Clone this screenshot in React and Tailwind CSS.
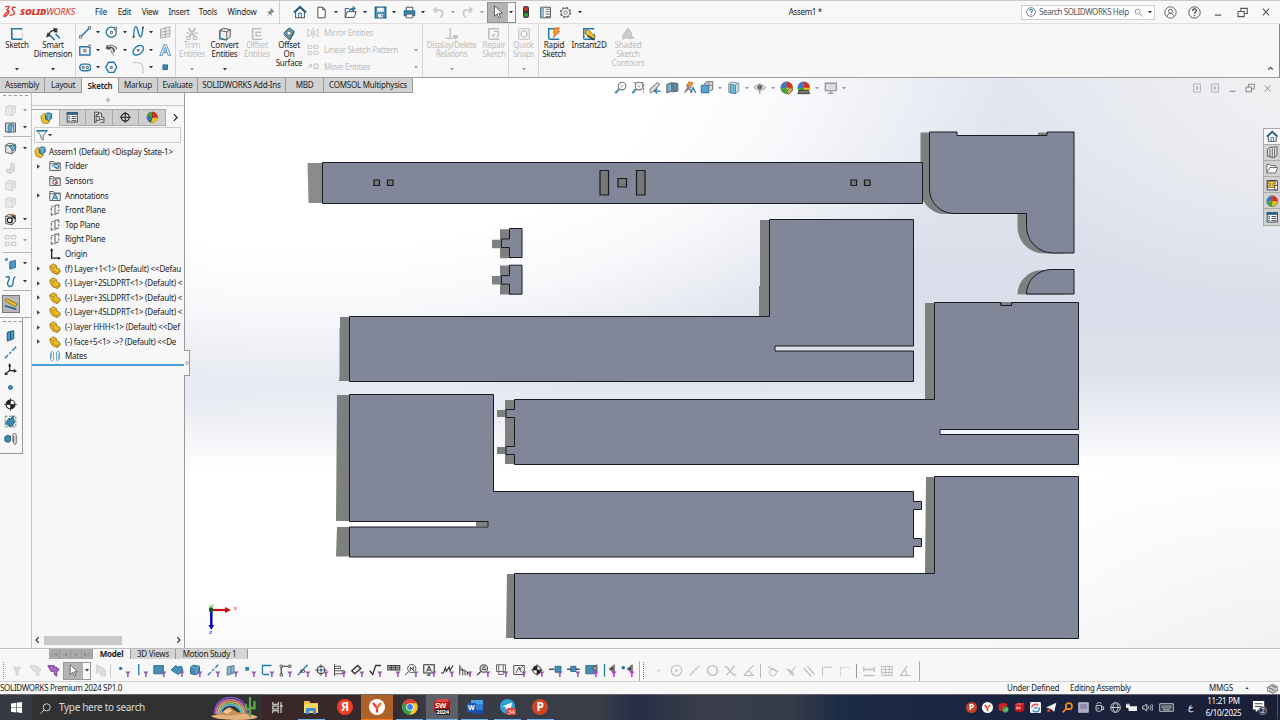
import React from "react";

const B = "#2279a8";
const D = "#4a4a4a";
const G = "#bfbfbf";

const line = (d, s = D, w = 1.3, f = "none") => <path d={d} stroke={s} strokeWidth={w} fill={f} />;

const part = (
  <>
    {line("M1 4l5-3 4 2.500v3l4 1.500 1 4-4 3.500-6-2.500-3-4z", "#8a6a10", 1, "#f0bd2a")}
    {line("M1.500 4.500l4 2v4l5.500 2.500v2M5.500 6.500l4-2.500M11 13l4-3", "#a57f17", 0.9)}
  </>
);
const assembly = (
  <>
    {line("M1 6l4-4 3 1v6l5 3-4 3.500-6-2z", "#8a6a10", 0.9, "#f0bd2a")}
    {line("M7 3l3-2 5 1v6l-4 3-4-2z", "#17506f", 0.9, "#3f93bd")}
    {line("M7 3l4 1v6M11 4l4-2", "#cbe5f2", 0.8)}
  </>
);
const ball = (
  <>
    <circle cx="8" cy="8" r="7" fill="#e8c51e" stroke="#444" strokeWidth=".6" />
    <path d="M8 8V1A7 7 0 0 0 1 9z" fill="#3a78d0" />
    <path d="M8 8L8 1A7 7 0 0 1 15 8z" fill="#dd2c22" />
    <path d="M8 8L1 9A7 7 0 0 0 8 15z" fill="#35a548" />
  </>
);
const ballDark = (
  <>
    <circle cx="8" cy="8" r="7" fill="#222" />
    <path d="M8 9L8 1A7 7 0 0 0 1.200 7z" fill="#35a548" />
    <path d="M8 9V1A7 7 0 0 1 15 8z" fill="#dd2c22" />
    <path d="M8 9l7-1A7 7 0 0 1 6 14.700z" fill="#e8c51e" />
    <path d="M8 9L1.100 7A7 7 0 0 0 4 13.700z" fill="#3a78d0" />
  </>
);
const box3d = (c, s, t) => (
  <>
    {line("M2 4l4-2.500 8 1.500v8l-4 3.500-8-1.500z", s, 1, c)}
    {line("M2 4l8 1.500v9M10 5.500l4-2.500", t || s, 0.9)}
  </>
);
const folder = (inner) => (
  <>
    {line("M1 14V2h5l1 2h8v10z", "#555", 1.200, "#efefef")}
    {line("M1 5h14", "#555", 1)}
    {inner}
  </>
);
const mag = (
  <>
    <circle cx="9.500" cy="6" r="4.500" fill="#fff" stroke="#777" strokeWidth="1.300" />
    <circle cx="9.500" cy="6" r="2" fill="#ccc" />
    {line("M6 9.500L1.500 14.500", "#4f93b8", 2.600)}
  </>
);

const icons = {
  home: <>{line("M3 8v6.500h10V8L8 3z", D, 1.200, "#fff")}{line("M1 8.500L8 2l7 6.500", "#205e80", 2)}{line("M6.500 14v-4.500h3V14", B, 1.200)}</>,
  file: line("M3.500 1.500h6l3 3v10h-9zM9.500 1.500v3h3", D, 1.200, "#fff"),
  open: <>{line("M1.500 14V3h4l1 1.500h5V7M1.500 14L4 7h11l-2.500 7z", D, 1.200, "#fff")}{line("M7 7c0-4 2-4 6-4M10.500 .5l3 2.500-3 3", B, 1.500)}</>,
  save: <>{line("M1.500 1.500h13v13h-13z", "#1c5f86", 1.500, "#4c93b8")}<path d="M4 2h8v5H4zM5 10h6v4H5z" fill="#f5f5f5" />{line("M9.500 11v2", D)}</>,
  print: <>{line("M4 6V1.500h8V6", D, 1.200, "#fff")}{line("M1.500 6h13v6h-13z", "#1c5f86", 1.200, "#3b86b0")}{line("M4 10h8v4.500H4z", D, 1, "#fff")}</>,
  undo: line("M3 5h6c6 0 5 7 1 9M6 1.500L2.500 5L6 8.500", "#ccc", 2.200),
  redo: line("M13 5H7c-6 0-5 7-1 9M10 1.500L13.500 5L10 8.500", "#ccc", 2.200),
  cursor: line("M4 1v12l3-3 2 5 2-1-2-4.500h4z", "#555", 1, "#fff"),
  light: <><rect x="4" y="0" width="8" height="16" rx="3" fill="#3a3a3a" /><circle cx="8" cy="4" r="2.800" fill="#d8311f" /><circle cx="8" cy="12" r="2.800" fill="#35a03c" /></>,
  list: <>{line("M2 1.500h12v13H2z", D, 1.200, "#fff")}<path d="M2 1.500h4v13H2z" fill="#6aa7c6" />{line("M3 5h2M3 8h2M3 11h2", "#fff", 1)}{line("M8 4h5M8 7h5M8 10h5M8 13h5", D, 1)}</>,
  gear: <><circle cx="8" cy="8" r="6" stroke="#666" strokeWidth="2" strokeDasharray="2.700 2" fill="#fff" /><circle cx="8" cy="8" r="5" stroke="#666" fill="#fff" /><circle cx="8" cy="8" r="2.200" stroke="#666" fill="none" /></>,
  pin: line("M9 1l5 5-2 1-3 3v3L3 7h3l3-4zM6 10l-4 4", "#777", 1, "#8a8a8a"),
  sketch: <>{line("M13 3h2M3 14h11M14 5v8M3 8h2", "#bbb", 0.800)}{line("M14 2H2v10c0 2 1 2 2 2h10", B, 1.900)}</>,
  dim: <>{line("M3 9C5 3 10 3 13 6", "#333", 1.500)}<path d="M0 12l2-6 4 4zM8 1l6 1-4 5z" fill="#333" />{line("M5 10l5 5M11 8l5 5", B, 1.900)}</>,
  line: <>{line("M2 14L14 2", B, 1.700)}{line("M.5 12.500h3v3h-3zM12 .8h3v3h-3z", D, 1, "#fff")}</>,
  circ: <><circle cx="8" cy="8" r="6.500" fill="none" stroke={B} strokeWidth="1.700" />{line("M7 7h2.500v2.500H7zM12 1.500h3v3h-3z", D, 1, "#fff")}</>,
  spline: <>{line("M2 14C3 -4 6 -1 8 8s5 8 6-6", B, 1.700)}<circle cx="2" cy="14" r="1.400" fill={D} /><circle cx="14" cy="2" r="1.400" fill={D} /></>,
  plane3: <>{line("M2 4l12-3v12l-12 2.500zM2 8l12-2.500M2 12l12-2.500M8 2v12", "#999", 1, "#eee")}</>,
  rect: <>{line("M1 3.500h13v10.500H1z", B, 1.800)}{line("M6 7h3v3H6zM12.500 1.500h3v3h-3z", D, 1, "#fff")}</>,
  arc: <>{line("M1 6C3 0 12 0 15 7", "#777", 1.300)}{line("M3 6c4-4 9-1 9 4M3 2v4h4", D, 1.800)}{line("M8 8h3v3H8zM9 12l2 3M13 4h2v2", "#777", 1)}</>,
  ellipse: <><ellipse cx="8" cy="8" rx="7.500" ry="5" transform="rotate(-40 8 8)" fill="none" stroke={B} strokeWidth="1.700" />{line("M7 7h2v2H7z", D, 1)}</>,
  text: line("M1 15L6.500 1h3L15 15h-3l-1.500-4h-5L4 15zM6 9h4L8 4z", B, 1),
  slot: <><rect x="1" y="4" width="14" height="8.500" rx="4" fill="none" stroke={B} strokeWidth="1.800" />{line("M4 7h2.500v2.500H4zM9.500 7h2.500v2.500H9.500z", D, 1)}</>,
  hex: <>{line("M4.500 1.500h7L15 8l-3.500 6.500h-7L1 8z", B, 1.800)}{line("M6.800 7h2.500v2.500H6.800z", D, 1)}</>,
  fillet: line("M1 2h6c5 0 7 4 7 7v6M12 15h3", "#c4c4c4", 1.300),
  point: <rect x="5" y="5" width="6" height="6" fill="#3388b5" stroke="#1d5e83" />,
  trim: <>{line("M4 1l7 10M12 1L5 11", G, 2)}<circle cx="4" cy="12.500" r="2" fill="none" stroke={G} strokeWidth="1.500" /><circle cx="11.500" cy="12.500" r="2" fill="none" stroke={G} strokeWidth="1.500" />{line("M1 7h4M11 7h4", G, 1.500)}</>,
  convert: <>{line("M2 4l4-2.500 8 1.500v8l-4 3.500-8-1.500z", D, 1.100, "#f0f0f0")}{line("M2 4l8 1.500v9M10 5.500l4-2.500", D, 1)}{line("M2 4.500v9l8 1.500", B, 1.500)}</>,
  offset: line("M13 2H3v12h11M13 6H7v4h6", G, 1.900),
  surf: <>{line("M2 7l6-6 6 4-5 9z", "#17506f", 1.100, "#69a9c8")}<circle cx="8" cy="7" r="2.500" fill="#fff" stroke={D} />{line("M2 9l7 6 5-9", D, 1)}</>,
  mirror: line("M8 1v14M1 3v10l5-3V6zM15 3v10l-5-3V6z", G, 1.100),
  pattern: line("M1.500 2h5v4h-5zM9.500 2h5v4h-5zM1.500 10h5v4h-5zM9.500 10h5v4h-5z", G, 1.100),
  move: line("M1 10l4-4M2 5h4v4M9.500 4h5v6h-5z", G, 1.300),
  disp: <>{line("M6 1v12M1 13h8", G, 1.500)}{line("M9 11h6M12 9v5", G, 2.500)}</>,
  repair: line("M14 2H2v10c0 2 0 2 2 2h10M6 11l3-3M8 5h5v5l-2 2", G, 1.700),
  snaps: <>{line("M2 2v12h12M3 2h11v11", G, 1.300)}<circle cx="8" cy="8" r="3.500" fill="none" stroke={G} strokeWidth="1.400" /></>,
  rapid: <>{line("M14 2H2v10c0 2 0 2 2 2h10", B, 1.700)}{line("M9 1h5l-2 4h3l-8 7 2-5H7z", "#d75c1b", 0.900, "#f3a11f")}</>,
  inst: <>{line("M14 2H2v10c0 2 0 2 2 2h10V8", B, 1.700)}{line("M4 4l3-1 8 8-2 2-9-5z", "#806310", 1, "#f0c33a")}{line("M6 10l8 5", "#333", 1.500)}</>,
  shaded: line("M4 7l4-6 4 6v3l3 3H9l-3-1-4 2V9z", "#bbb", 1, "#ccc"),
  chev: line("M4 10l4-4 4 4", D, 2.400),
  part, assembly, ball, ballDark,
  props: <>{line("M1.500 2h13v12h-13z", D, 1.300, "#fff")}<path d="M1 1.500h14V5H1z" fill="#2c6585" />{line("M3 7h2M3 9.500h2M3 12h2", B, 1.700)}{line("M7 7h6M7 9.500h6M7 12h6", D, 1.200)}</>,
  config: line("M2 1.500h5v3H4v10H2zM4 7h4v5H4M7 2l4 1v5h3v6.500h-4M9 11h4", D, 1.200, "#e4e4e4"),
  target: <><circle cx="8" cy="8" r="5" fill="none" stroke="#222" strokeWidth="1.500" />{line("M8 1v14M1 8h14", "#222", 1.300)}</>,
  funnel: <>{line("M1 2h14L9.500 9v6L6.500 12V9z", "#555", 1.100, "#e9f3f8")}{line("M1 2.500h14", B, 2)}</>,
  fHist: folder(line("M5 9a4 3 0 1 1 4 3M8 8v2h3", B, 1.400)),
  fSens: folder(<><circle cx="8" cy="9.500" r="3" fill="#fff" stroke="#444" strokeWidth="1.300" />{line("M8 9.500l3 2", "#d32", 1.700)}</>),
  fAnn: folder(line("M4.500 13L8 5l3.500 8M5.800 10.500h4.500", B, 1.500)),
  plane: line("M3 4l3-1M8.500 2L13 1v4M13 7v3M13 12l-4 1M6 14l-3 1v-4M3 9V5M8 1v14", D, 1.200),
  origin: <>{line("M3.500 2v11.500H14", "#222", 1.700)}<path d="M1.500 4l2-4 2 4zM12 11.500l4 2-4 2z" fill="#222" /></>,
  mates: line("M2 4v8c0 3 4 3 4 0V4c0-3-3-3-3 0v7M14 12V4c0-3-4-3-4 0v8c0 3 3 3 3 0V5", "#5b9fc4", 1.200),
  boxGray: <>{box3d("#eaeaea", "#ccc")}</>,
  boxIns: <>{line("M2 2.500h12v11H2z", D, 1.200, "#eee")}{line("M5 5l4-1v9l-4 1zM9 4l3 1v8", "#2b6f94", 1, "#70acc9")}</>,
  boxBlue: <>{box3d("#e4e4e4", D)}{line("M6 5l5-1 4 2-4 5z", "#1c5f86", 1, "#6db2d2")}</>,
  clipGray: line("M9 1l4 2v8l-5 3-5-2v-3h5z", "#ccc", 1.200, "#ddd"),
  smart: <>{box3d("#ddd", D)}<circle cx="7" cy="9" r="3" fill="#fff" stroke="#222" strokeWidth="1.500" />{line("M9 2l5 5", "#333", 2.500)}{line("M8 2h4", "#e08a1e", 2)}</>,
  refGeo: <>{line("M7 6l7-2v9l-7 2z", "#1c5f86", 1, "#4b9ac1")}<circle cx="3" cy="3" r="2" fill="#4b9ac1" /></>,
  curve: line("M2 3c6-3 5 2 3 5-2 5 2 8 5 5 3-4-1-8 4-11", B, 1.700),
  measure: <>{line("M1 4l2-2 12 6-2 3z", "#8c6a0c", 1, "#f3c52f")}{line("M1 10l13 4", "#1d5e83", 2)}</>,
  planeB: line("M4 4l8-2v10l-8 3zM8 3v10", "#17506f", 1.100, "#4b9ac1"),
  axisD: line("M1 15l4-4M6.500 9.500l2-2M10 6l5-5", B, 1.700),
  triad: <>{line("M7 2v7l-5 5M7 9l7 1", "#222", 1.600)}<path d="M5 4l2-4 2 4zM12 7l4 3-4 2zM1 11l0 4 4-1z" fill="#222" /></>,
  dot: <circle cx="8" cy="8" r="2.500" fill="#3d90ba" stroke="#1d5e83" />,
  cg: <><circle cx="8" cy="8" r="5.500" fill="#fff" stroke="#222" strokeWidth="1.300" /><path d="M8 8V2.500A5.500 5.500 0 0 0 2.500 8zM8 8h5.500A5.500 5.500 0 0 1 8 13.500z" fill="#222" />{line("M8 0v16M0 8h16", "#222", 0.800)}</>,
  bbox: <><path d="M1.500 1.500h13v13h-13z" fill="none" stroke="#666" strokeDasharray="3 1.500" />{line("M2 10l4-6 2 1 3-4 2 8-3 5-5-1z", "#17506f", 1, "#3d89af")}</>,
  mateB: <>{line("M1 6l3-2 4 1v6l-3 2-4-2z", "#17506f", 1, "#3d89af")}{line("M11 12V4c0-3 4-3 4 0v9c0 3-3 3-3 0V5", "#555", 1.200)}</>,
  zoomFit: mag,
  zoomArea: <><path d="M3 2h12v12" fill="none" stroke="#777" strokeDasharray="3 1.500" strokeWidth="1.200" />{mag}</>,
  prev: <>{line("M2 10L11 2l3 2-7 8-4 2z", "#888", 1.200, "#ddd")}{line("M15 12H8l3-3M8 12l3 3", B, 1.500)}</>,
  section: <>{line("M1 4l6-2v10l-6 2z", "#444", 1, "#79b4d0")}{line("M8 2l6 1v9l-6 1z", "#555", 1, "#4d8eaf")}</>,
  dyn: <>{line("M2 14L8 3M5 6l6 8M3 12l7-5", "#888", 1.800, "none")}{line("M4 6l3-5 5 1-2 4z", "#c2701a", 1, "#eca13f")}{line("M9 14l3-6 3 6", B, 1.500)}</>,
  orient: <>{line("M5 4l3-3h7v9l-3 2", "#777", 1.200, "#ddd")}{line("M1.500 5h9v9h-9z", "#1c5f86", 1, "#5ba5c9")}{line("M10.500 5h5M10.500 1v4", "#777", 1)}</>,
  style: <>{line("M2 3l4-2 8 1.500v9.500l-4 3-8-1.500z", "#888", 1, "#c3dbe6")}{line("M4 4l6 1.200v9.800l-6-1.200z", "#4b7e98", 1, "#6fb5d6")}{line("M10 5l4-2.500", "#888", 0.900)}</>,
  eye: <>{line("M1 8c4-5 10-5 14 0-4 4-10 4-14 0z", "#aaa", 1.200, "#ddd")}<circle cx="8" cy="7.500" r="2.700" fill="#555" />{line("M8 3v12", "#888")}</>,
  ballE: <>{ball}{line("M8 12l5-5 2 4-5 5z", "#76592b", 1, "#d2a965")}</>,
  scene: <>{ball}{line("M1 15l2-4h10l2 4z", "#333", 1, "#777")}</>,
  monitor: line("M1.500 2.500h13v9h-13zM8 11.500V14M4.500 14.500h7", "#888", 1.300, "#ddd"),
  winMin: line("M3 13h10", "#555", 1.900),
  winRes: line("M1.500 6.500h9V14h-9zM5.500 6.500V2H15v7.500h-4.500", "#555", 1.500),
  winX: line("M3 2.500l10 11M13 2.500L3 13.500", "#555", 1.700),
  panL: line("M2.500 1.500h11v13h-11zM9 5L6 8l3 3z", "#888", 1.300),
  panR: line("M2.500 1.500h11v13h-11zM7 5l3 3-3 3z", "#888", 1.300),
  help: <><circle cx="8" cy="8" r="7" fill="#fff" stroke="#555" strokeWidth="1.200" />{line("M5.700 6c0-3.500 5-3 4.500 0C10 7.500 8 7.500 8 9.500M8 11v1.500", B, 1.800)}</>,
  help2: <><circle cx="8" cy="8" r="7" fill="none" stroke="#555" strokeWidth="1.200" />{line("M5.700 6c0-3.500 5-3 4.500 0C10 7.500 8 7.500 8 9.500M8 11v1.500", "#444", 1.500)}</>,
  user: <><circle cx="8" cy="8" r="7" fill="none" stroke="#666" strokeWidth="1.200" /><circle cx="8" cy="6.500" r="2.500" fill="none" stroke="#666" strokeWidth="1.200" />{line("M4 13c0-5 8-5 8 0", "#666", 1.200)}</>,
  search: <><circle cx="6.500" cy="6.500" r="4.500" fill="none" stroke="#777" strokeWidth="1.300" />{line("M10 10l5 5", "#777", 1.500)}</>,
  cabinet: line("M2 4l3-2 9-1v11l-4 3-8-2zM5 4v10M8 3v11M11 3v11", "#555", 1.200, "#e8e8e8"),
  openF: line("M1 14V3h4l1 1.500h6V7M1 14L5 7h10l-3 7z", "#666", 1.200, "#fff"),
  palette: <>{line("M1.500 2h13v12h-13z", "#333", 1.200, "#fff")}<path d="M2 3h10v3H9v2h3v3H2V8h3V6H2z" fill="#f0bd2a" stroke="#333" strokeWidth=".7" /><path d="M11 8h4v6h-4z" fill="#eee" stroke="#333" /></>,
  fun: line("M3 3h10L9.500 8v6L6.500 12V8z", "#ccc", 1, "#ddd"),
  fun3: line("M1 2h8v2h3v2h3l-3 4v5l-3-2V9L5 8z", "#c8c8c8", 1, "#e2e2e2"),
  funP: line("M1 2h8v2h3v2h3l-3 4v5l-3-2V9L5 9z", "#5c2a80", 1, "#a86ac5"),
  curG: line("M3 1v11l3-3 2 5 6 1V7z", "#ccc", 1, "#ddd"),
  sDot: <circle cx="5" cy="6" r="2.400" fill="#2c86b3" />,
  sLine: line("M5 0v15", B, 1.800),
  sFace: line("M1 2h13v11H1z", "#1c5f86", 1, "#438fb6"),
  sSurf: line("M0 8l6-6 3 2 5-1 2 6-6 5-4-2z", "#1c5f86", 1, "#438fb6"),
  sBody: box3d("#438fb6", "#184e6c", "#8cc0da"),
  sAxis: line("M1 15l4-4M6.500 9.500l3-3M11 5l4-4", B, 1.700),
  sPlane: line("M3 4l9-2v10l-9 3zM8 3v10", "#3c6f89", 1.100, "#88bbd3"),
  sPt: <rect x="3" y="4" width="5" height="5" fill="#2c86b3" />,
  sSk: line("M14 2H2v10c0 2 0 2 2 2h7", B, 1.700),
  sSeg: <>{line("M3 15V3h12", "#333", 1.500)}{line("M1.500 1.500h3v3h-3zM13 1.500h3v3h-3zM1.500 13h3v3h-3z", "#333", 1, "#fff")}</>,
  sMid: <>{line("M1 15L14 1", B, 1.600)}{line("M5 8h5v3H5z", "#333", 1)}</>,
  sCm: <><circle cx="8" cy="8" r="5" fill="#fff" stroke="#333" strokeWidth="1.400" />{line("M8 0v16M0 8h16", "#333", 1)}<circle cx="8" cy="8" r="1.500" fill={B} /></>,
  sDim: line("M2 0v16M2 3h8v3H2M2 9h13v4H2", "#444", 1.200),
  sAng: line("M1 9l8-7 4 4-8 7z", "#333", 1.900, "#eee"),
  sSurfF: line("M1 9l4 5L9 2h7", "#333", 1.700),
  sGtol: line("M0 2h17v6H0zM6 2v6M11 2v6M2 5h3M7 5h3M12 5h3", "#444", 1.500, "#aaa"),
  sNote: <><circle cx="9" cy="6" r="5.500" fill="#fff" stroke="#444" strokeWidth="1.200" />{line("M0 15l5-5M7 9V4l4 4.500V3", "#333", 1.300)}</>,
  sDat: <>{line("M1 1h14v11H1zM8 12v3M5 15h5", "#333", 1.400, "#eee")}{line("M5 10l3-7 3 7M6 8h4", "#333", 1.300)}</>,
  sWeld: line("M0 12h3l3-7 1 5 4-6 1 5 4-7", "#333", 1.500),
  sHatch: line("M1 1v14M1 8h6l9 7M5 8v7M8 9v6M11 11v4M1 4l5 4", "#444", 1.300),
  sMag: <><circle cx="9" cy="6" r="5" fill="#ddd" stroke="#444" strokeWidth="1.400" />{line("M0 15l5-5M6 7h6M7 4h4", "#333", 1.500)}</>,
  sScrew: line("M2 1h12v9H2zM5 10v4h6v-4M5 1v9M11 1v9", "#666", 1.300),
  sPic: line("M1 2h14v12H1zM4 12l4-8 3 7M8 8l5-5", "#444", 1.200),
  sBlk: <>{line("M0 7h7", "#333", 1.700)}{line("M8 3h8v8H8z", "#1d5e83", 1, "#438fb6")}</>,
  sBlk2: <>{line("M0 7h17", "#333", 1.700)}{line("M5 3h7v7H5z", "#1d5e83", 1, "#438fb6")}</>,
  sGr: <>{line("M1 2h13v11H1z", "#1d5e83", 1, "#438fb6")}{line("M9 6l7-5v9z", "#444", 1, "#999")}</>,
  sGr2: <>{line("M2 0v17", B, 1.700)}{line("M8 7l7-6v10z", "#444", 1, "#888")}<circle cx="12" cy="6" r="1.500" fill="#333" /></>,
  sGr3: <><circle cx="3" cy="5" r="2.400" fill={B} />{line("M8 7l7-6v10z", "#444", 1, "#888")}<circle cx="12" cy="6" r="1.500" fill="#333" /></>,
  nDot: <circle cx="8" cy="8" r="1.300" fill={G} />,
  nCen: <><circle cx="8" cy="8" r="6.500" fill="none" stroke={G} strokeWidth="1.400" /><circle cx="8" cy="8" r="1.500" fill={G} /></>,
  nLine: line("M2 14L14 2", G, 1.500),
  nCirc: <circle cx="8" cy="8" r="6" fill="none" stroke={G} strokeWidth="1.800" />,
  nX: line("M1 3c6 0 6 10 14 11M13 2L3 14", G, 1.700),
  nNear: line("M2 14L14 2M3 14h12M8 8l5 5", G, 1.500),
  nTan: <><circle cx="8" cy="10" r="4.500" fill="none" stroke={G} strokeWidth="1.400" />{line("M1 2l14 7", G, 1.400)}</>,
  nPerp: line("M2 5l10 9M14 2L6 13M5 6l6 5", G, 1.500),
  nPar: line("M1 4l10 11M6 2l10 11", G, 1.500),
  nCor: line("M2 15V3h13", G, 1.400),
  nCorD: <path d="M2 15V3h13" fill="none" stroke={G} strokeWidth="1.500" strokeDasharray="2 1.500" />,
  nLen: line("M1 2v7M15 2v7M1 6h14M1 14h14", G, 1.700),
  nGrid: line("M1 2h14v12H1zM6 1v14M11 1v14M1 6h14M1 10h14", G, 1.300),
  nAng: line("M15 14H2L11 1M7 7c3 1 3 3 3 7", G, 1.500),
  trafficSt: <>{line("M0 7l8-5 8 4v4l-7 5-9-4z", "#555", 1.200, "#ccc")}{line("M3 7l8 4M7 4l6 3", "#555", 1.200)}</>,
};

const S = "block shrink-0";
function Icon({ n, c = "size-3" }) {
  return (
    <svg viewBox="0 0 16 16" className={`${S} ${c}`} aria-hidden="true">
      {icons[n]}
    </svg>
  );
}

function Caret({ dim, up }) {
  return (
    <svg viewBox="0 0 5 3" className={`${S} w-[4px] h-[2.500px]`} aria-hidden="true">
      <path d={up ? "M0 3h5L2.500 0z" : "M0 0h5L2.500 3z"} fill={dim ? "#9a9a9a" : "#333"} />
    </svg>
  );
}

const Cell = ({ w, children }) => <div className={`flex items-center justify-center shrink-0 ${w}`}>{children}</div>;

/* ---------- title bar ---------- */
function TitleBar() {
  const menus = [
    ["File", "w-[24px]"], ["Edit", "w-[23px]"], ["View", "w-[28px]"], ["Insert", "w-[30px]"], ["Tools", "w-[28px]"], ["Window", "w-[40px]"],
  ];
  const quick = [["file"], ["open"], ["save"], ["print"], ["undo", 1], ["redo", 1]];
  return (
    <header className="flex h-6 items-center border-t border-b border-t-[#c9c9c9] border-b-[#dedede] bg-[#f8f8f8]">
      <div className="flex w-[89px] shrink-0 items-center pl-[3px] text-[#d9352b]">
        <svg viewBox="0 0 26 28" className="h-[14px] w-[14px]">
          <path d="M3 4c6-2 9-2 8 1S7 9 5 10M8 10c4 1 4 5-1 10-3 3-6 4-6 2s5-7 8-10M25 5c-9-3-9 3-5 7s2 9-8 8" fill="none" stroke="#d9352b" strokeWidth="2.600" />
        </svg>
        <span className="ml-[3px] text-[9.300px] leading-none italic tracking-[-0.200px]"><b className="font-black">SOLID</b>WORKS</span>
      </div>
      <nav className="flex w-[175px] shrink-0">
        {menus.map(([m, w]) => <div key={m} className={`text-center shrink-0 whitespace-nowrap ${w}`}>{m}</div>)}
      </nav>
      <Cell w="w-[15px] ml-[-1px]"><Icon n="pin" c="size-[9px]" /></Cell>
      <div className="ml-px h-[23px] w-px shrink-0 bg-[#cfcfcf]" />
      <Cell w="w-[40px]"><Icon n="home" c="size-[14px]" /></Cell>
      {quick.map(([n, dim]) => (
        <div key={n} className="flex w-[29.300px] shrink-0 items-center -translate-x-[5px]">
          <Cell w="w-[13px]"><Icon n={n} c="size-[13px]" /></Cell>
          <Cell w="w-[15px]"><Caret dim={dim} /></Cell>
        </div>
      ))}
      <div className="-ml-[9px] flex h-[21px] w-[29px] shrink-0 border border-[#8f8f8f]">
        <div className="flex w-[20px] items-center justify-center bg-[#b3b3b3]"><Icon n="cursor" c="size-[14px]" /></div>
        <Cell w="w-[7px]"><Caret /></Cell>
      </div>
      <Cell w="w-[20px]"><Icon n="light" c="size-[12px]" /></Cell>
      <Cell w="w-[20px]"><Icon n="list" c="size-[13px]" /></Cell>
      <Cell w="w-[20px]"><Icon n="gear" c="size-[13px]" /></Cell>
      <Cell w="w-[9px]"><Caret /></Cell>
      <div className="pl-[204px] tracking-[-0.350px] whitespace-nowrap">Assem1 *</div>
      <div className="ml-auto mr-[3px] flex h-[15px] w-[134px] shrink-0 items-center border border-[#d0d0d0] bg-white text-[8px] text-[#555]">
        <Cell w="w-[17px]"><Icon n="help" c="size-[10px]" /></Cell>
        <span className="w-[76px] shrink-0 tracking-[-0.380px] whitespace-nowrap">Search SOLIDWORKS Help</span>
        <Cell w="w-[10px] ml-auto mr-[3px]"><Icon n="search" c="size-[9px]" /></Cell>
        <Cell w="w-[8px]"><Caret /></Cell>
      </div>
      <Cell w="w-[24px]"><Icon n="user" c="size-[13px]" /></Cell>
      <Cell w="w-[24px]"><Icon n="help2" c="size-[13px]" /></Cell>
      <Cell w="w-[23px]"><Icon n="winMin" c="size-[10px]" /></Cell>
      <Cell w="w-[27px]"><Icon n="winRes" c="size-[11px]" /></Cell>
      <Cell w="w-[20px] mr-[4px]"><Icon n="winX" c="size-[10px]" /></Cell>
    </header>
  );
}

/* ---------- ribbon ---------- */
function Big({ n, label, w, dim, caret }) {
  return (
    <div className={`flex h-full shrink-0 flex-col items-center pt-[3px] ${w}`}>
      <Icon n={n} c="size-[14px]" />
      <div className={`h-[27px] whitespace-pre text-center leading-[8.800px] ${dim ? "text-[#bdbdbd]" : ""}`}>{label}</div>
      {caret && <div><Caret dim={dim} /></div>}
    </div>
  );
}

const Sep = () => <div className="h-full w-px shrink-0 bg-[#d6d6d6]" />;

function Ribbon() {
  const grid = [["line", "circ", "spline", "plane3"], ["rect", "arc", "ellipse", "text"], ["slot", "hex", "fillet", "point"]];
  return (
    <section className="flex h-[54px] shrink-0 border-b border-[#9c9c9c] bg-[#f7f7f7]">
      <Big n="sketch" label="Sketch" w="w-[34px]" caret />
      <Big n="dim" label={"Smart\nDimension"} w="w-[38px] mr-[3px]" caret />
      <Sep />
      <div className="flex h-full w-[99px] shrink-0 flex-col">
        {grid.map((row, r) => (
          <div key={r} className="flex h-[17.400px] items-center pl-[2px]">
            {row.map((n, i) => (
              <div key={n} className="flex w-[26.700px] shrink-0 items-center">
                <Cell w="w-[14px]"><Icon n={n} c="size-[12.500px]" /></Cell>
                {i < 3 && n !== "hex" && <Cell w="w-[12px]"><Caret /></Cell>}
              </div>
            ))}
          </div>
        ))}
      </div>
      <Sep />
      <Big n="trim" label={"Trim\nEntities"} w="w-[32px]" dim caret />
      <Big n="convert" label={"Convert\nEntities"} w="w-[33px]" caret />
      <Big n="offset" label={"Offset\nEntities"} w="w-[32px]" dim />
      <Big n="surf" label={"Offset\nOn\nSurface"} w="w-[32px]" />
      <div className="flex w-[117px] shrink-0 flex-col text-[#bdbdbd]">
        {[["mirror", "Mirror Entities"], ["pattern", "Linear Sketch Pattern", 1], ["move", "Move Entities", 1]].map(([n, t, c]) => (
          <div key={n} className="flex h-[17.400px] items-center pl-[2px]">
            <Icon n={n} c="size-[12px]" />
            <span className="ml-[5px] w-[90px] tracking-[-0.300px] whitespace-nowrap">{t}</span>
            {c && <Caret dim />}
          </div>
        ))}
      </div>
      <Sep />
      <Big n="disp" label={"Display/Delete\nRelations"} w="w-[57px] tracking-[-0.320px]" dim caret />
      <Big n="repair" label={"Repair\nSketch"} w="w-[28px]" dim />
      <Sep />
      <Big n="snaps" label={"Quick\nSnaps"} w="w-[29px]" dim caret />
      <Sep />
      <Big n="rapid" label={"Rapid\nSketch"} w="w-[30px]" />
      <Big n="inst" label="Instant2D" w="w-[40px]" />
      <Big n="shaded" label={"Shaded\nSketch\nContours"} w="w-[38px]" dim />
      <div className="ml-auto flex items-end border-r border-[#888] pr-[4px] pb-[4px]"><Icon n="chev" c="size-[9px]" /></div>
    </section>
  );
}

/* ---------- command tabs + heads-up toolbar ---------- */
function TabRow() {
  const tabs = [
    ["Assembly", "w-[45px]"], ["Layout", "w-[37px]"], ["Sketch", "w-[37px]"], ["Markup", "w-[39px]"], ["Evaluate", "w-[40px]"],
    ["SOLIDWORKS Add-Ins", "w-[88px]"], ["MBD", "w-[38px]"], ["COMSOL Multiphysics", "w-[89px]"],
  ];
  const view = [
    ["zoomFit"], ["zoomArea"], ["prev"], ["section"], ["dyn"], ["orient", 1], ["style", 1], ["eye", 1], ["ballE"], ["scene", 1], ["monitor", 1],
  ];
  return (
    <div className="flex h-[15px] shrink-0">
      <div className="flex h-[15px] w-[413px] shrink-0">
        {tabs.map(([t, w]) => (
          <div key={t} className={`flex shrink-0 items-center justify-center whitespace-nowrap border-r border-[#999] ${w} ${t === "Sketch" ? "bg-[#f7f7f7] font-semibold" : "border-b bg-[#d2d2d2]"}`}>{t}</div>
        ))}
      </div>
      <div className="ml-[199px] flex h-[20px] items-center">
        {view.map(([n, c]) => (
          <React.Fragment key={n}>
            <Cell w="w-[17.300px]"><Icon n={n} c="size-[13.500px]" /></Cell>
            {c && <Cell w="w-[9.200px]"><Caret dim /></Cell>}
          </React.Fragment>
        ))}
      </div>
      <div className="ml-auto mr-[4px] flex h-[20px] items-center opacity-70">
        <Cell w="w-[18px]"><Icon n="panL" c="size-[10px]" /></Cell>
        <Cell w="w-[17px]"><Icon n="panR" c="size-[10px]" /></Cell>
        <Cell w="w-[18px]"><Icon n="winMin" c="size-[9px]" /></Cell>
        <Cell w="w-[17px]"><Icon n="winRes" c="size-[10px]" /></Cell>
        <Cell w="w-[18px]"><Icon n="winX" c="size-[9px]" /></Cell>
      </div>
    </div>
  );
}

/* ---------- left tool strip ---------- */
function ToolStrip() {
  const rows = [
    ["boxGray", "h-[17px]", 1], ["boxIns", "h-[17px]", 1], "-", ["boxBlue", "h-[23px]", 1], ["clipGray", "h-[17px]"], ["boxGray", "h-[17px]"],
    ["boxGray", "h-[17px]"], ["smart", "h-[17px]", 1], "-", ["pattern", "h-[23px]", 1], "-", ["refGeo", "h-[20px]", 1], ["curve", "h-[17px]", 1], "-",
  ];
  const low = ["planeB", "axisD", "triad", "dot", "cg", "bbox", "mateB"];
  return (
    <aside className="flex w-[31px] shrink-0 flex-col bg-[#f7f7f7] pt-[2px]">
      <div className="mx-[3px] mb-[6px] border-t border-dashed border-[#999]" />
      {rows.map((r, i) =>
        r === "-" ? (
          <div key={i} className="ml-[3px] h-px shrink-0 bg-[#b5b5b5]" />
        ) : (
          <div key={i} className={`flex shrink-0 items-center pl-[4px] ${r[1]}`}>
            <Icon n={r[0]} c="size-[13px]" />
            {r[2] && <div className="ml-[6px]"><Caret dim={/Gray|pattern/.test(r[0])} /></div>}
          </div>
        )
      )}
      <div className="ml-[2px] mt-[4px] flex h-[18px] w-[18px] shrink-0 items-center justify-center border border-[#777] bg-[#b8b8b8]"><Icon n="measure" c="size-[14px]" /></div>
      <div className="mt-[4px] h-px shrink-0 bg-[#aaa]" />
      <div className="flex w-[23px] shrink-0 flex-col border-r border-b border-[#999] pt-[3px]">
        <div className="ml-[3px] border-t border-dashed border-[#999]" />
        <div className="flex flex-col pt-[5px] pb-[6px]">
          {low.map((n) => <div key={n} className="flex h-[17.200px] items-center pl-[4px]"><Icon n={n} c="size-[13px]" /></div>)}
        </div>
      </div>
    </aside>
  );
}

/* ---------- feature tree ---------- */
function FeaturePanel() {
  const tree = [
    ["fHist", "Folder", 1], ["fSens", "Sensors"], ["fAnn", "Annotations", 1], ["plane", "Front Plane"], ["plane", "Top Plane"], ["plane", "Right Plane"],
    ["origin", "Origin"], ["part", "(f) Layer+1<1> (Default) <<Defau", 1], ["part", "(-) Layer+2SLDPRT<1> (Default) <", 1],
    ["part", "(-) Layer+3SLDPRT<1> (Default) <", 1], ["part", "(-) Layer+4SLDPRT<1> (Default) <", 1], ["part", "(-) layer HHH<1> (Default) <<Def", 1],
    ["part", "(-) face+5<1> ->? (Default) <<De", 1], ["mates", "Mates"],
  ];
  return (
    <aside className="flex w-[154px] shrink-0 flex-col border-l border-r border-l-[#c4c4c4] border-r-[#999] bg-[#f7f7f7]">
      <div className="flex h-[13px] shrink-0 items-center justify-center border-b border-[#c8c8c8] pt-[2px]"><div className="size-[4px] rounded-full border border-[#aaa] bg-[#ddd]" /></div>
      <div className="mt-[3px] flex h-[17px] shrink-0">
        {["assembly", "props", "config", "target", "ballDark"].map((n, i) => (
          <div key={n} className={`flex shrink-0 items-center justify-center ${i ? "w-[26.600px] border border-l-0 border-[#aaa] bg-[#cfcfcf]" : "w-[27.500px] border-t border-r border-[#aaa] pl-[2px]"}`}><Icon n={n} c="size-[12.500px]" /></div>
        ))}
        <Cell w="w-[20px]">
          <svg viewBox="0 0 6 8" className="h-[7px] w-[5px]"><path d="M1 0l4 4-4 4" fill="none" stroke="#222" strokeWidth="1.400" /></svg>
        </Cell>
      </div>
      <div className="mt-px ml-[2px] flex h-[16px] w-[147px] shrink-0 items-center border border-[#ccc] pl-px"><Icon n="funnel" c="size-[12px]" /><Caret /></div>
      <div className="flex h-[16px] shrink-0 items-center pl-[2px] pt-[1px]">
        <Icon n="assembly" c="size-[12px]" />
        <span className="ml-[3px] whitespace-nowrap tracking-[-0.200px]">Assem1 (Default) &lt;Display State-1&gt;</span>
      </div>
      {tree.map(([n, t, a], i) => (
        <div key={i} className="flex h-[14.610px] shrink-0 items-center pl-[5px]">
          <svg viewBox="0 0 4 6" className="h-[5px] w-[3px] shrink-0">{a && <path d="M0 0l4 3-4 3z" fill="#444" />}</svg>
          <Icon n={n} c="ml-[9px] size-[12px]" />
          <span className={`ml-[4px] whitespace-nowrap ${n === "part" ? "tracking-[-0.170px]" : ""}`}>{t}</span>
        </div>
      ))}
      <div className="h-[2px] shrink-0 bg-[#4b9fd6]" />
      <div className="mt-auto mb-[3px] flex h-[10px] shrink-0 items-center justify-between px-[3px]">
        <svg viewBox="0 0 4 6" className="h-[6px] w-[4px]"><path d="M4 0L1 3l3 3" fill="none" stroke="#333" strokeWidth="1.200" /></svg>
        <div className="mr-[51px] h-[9px] w-[78px] bg-[#c9c9c9]" />
        <svg viewBox="0 0 4 6" className="h-[6px] w-[4px]"><path d="M0 0l3 3-3 3" fill="none" stroke="#333" strokeWidth="1.200" /></svg>
      </div>
    </aside>
  );
}

/* ---------- model drawing ---------- */
const PLATE = "M929.500 132H957V135.500H1047V132H1074V253H1053A26.500 26.500 0 0 1 1026.500 226.500V213.500H954A24.500 24.500 0 0 1 929.500 189Z";
const CORNER = "M1074 269.500V294H1026.500A25 24.500 0 0 1 1051.500 269.500Z";
const TEE = "M509.500 228.500H522V257.500H509.500V247.500H501.500V239H509.500Z";

function Model() {
  return (
    <svg viewBox="185 93 1095 555" className="block h-[555px] w-[1095px]">
      <g fill="#7e807f" className="blur-[0.400px]">
        <path d="M307.500 163H322V203H308.500z" fill="#8b8b8b" />
        <path d="M760 220h9v96h-10v-30h1zM340 317h9v64h-10l.5-5V328h.5zM925 303h9v96h-9zM505 400h9v64h-9zM497 410h9v7h-9zM497 447h9v7h-9zM337 395h12v126h-13zM337 527h12v29.500h-13zM476 522h12v4.500h-12zM926 477h8v96h-9zM507 574h7v64h-8z" />
        <path d={PLATE} transform="translate(-9 .5)" />
        <path d={CORNER} transform="translate(-9 .5)" />
        <path d={TEE} transform="translate(-9.500 .8)" />
        <path d={TEE} transform="translate(-9.500 37)" />
      </g>
      <g fill="#828699" stroke="#181b20" strokeWidth="1">
        <path d="M322.500 162.500H922.500V203.500H322.500Z" />
        <path d="M769.500 219.500H913.500V346H775V351H913.500V381.500H349.500V316.500H769.500Z" />
        <path d="M934.500 302.500H1001V305.500H1011.500V302.500H1078.500V429.500H940V434.500H1078.500V464.500H514.500V454.500H506V446.500H514.500V417.500H506V409.500H514.500V399.500H934.500Z" />
        <path d="M349.500 394.500H493.500V491.500H913.500V501.500H921.500V509.500H913.500V538.500H921.500V546.500H913.500V557H349.500V527H488V521.500H349.500Z" />
        <path d="M934.500 476.500H1078.500V638.500H514.500V573.500H934.500Z" />
        <path d={PLATE} />
        <path d={CORNER} />
        <path d={TEE} />
        <path d={TEE} transform="translate(0 36.700)" />
      </g>
      <path d="M1001 302h10v3h-10z" fill="#808280" />
      <path d="M1001 302.500v3h10.500v-3" fill="none" stroke="#181b20" />
      <g fill="#777777" stroke="#181b20" strokeWidth="1.200">
        <path d="M374 180h5.500v5.500H374zM387.500 180h5.500v5.500h-5.500zM600 170.500h8.500V195H600zM618 178.500h8.500v8.500H618zM636.500 170.500h8.500V195h-8.500zM851 180h5.500v5.500H851zM864.500 180h5.500v5.500h-5.500z" />
      </g>
      <g>
        <path d="M211 610h15" stroke="#c80f0f" strokeWidth="2.200" />
        <path d="M225 607l6 3-6 3z" fill="#c80f0f" />
        <path d="M211.300 610v16" stroke="#0a0ab4" strokeWidth="2.500" />
        <path d="M208.500 625h5.600l-2.800 5z" fill="#0a0ab4" />
        <rect x="209" y="607.500" width="4" height="4" fill="#145c22" />
        <path d="M209.500 605l2 2.500 2-3" stroke="#3cb44a" fill="none" />
        <text x="233.800" y="610" fontSize="6" fontWeight="600" fill="#ee5a60">x</text>
        <text x="209.300" y="634" fontSize="6" fontWeight="600" fill="#3b3bff">z</text>
      </g>
    </svg>
  );
}

function TaskPane() {
  return (
    <div className="absolute top-[35px] right-0 flex w-[17px] flex-col border-t border-l border-[#aaa]">
      {["home", "cabinet", "openF", "palette", "ball", "props"].map((n, i) => (
        <div key={n} className={`flex h-[16.100px] items-center justify-center border-b border-[#aaa] ${i ? "bg-[#d2d2d2]" : "bg-[#f7f7f7]"}`}><Icon n={n} c="size-[12.500px]" /></div>
      ))}
    </div>
  );
}

/* ---------- bottom rows ---------- */
function SheetTabs() {
  return (
    <div className="flex h-[11px] shrink-0 border-t border-[#bdbdbd] bg-[#f7f7f7] pl-[32px]">
      <div className="ml-[17px] flex w-[44px] bg-[#aaaaaa]">
        {["|◂", "◂", "▸", "▸|"].map((t) => <div key={t} className="flex w-[11px] items-center justify-center border-r border-[#999] text-[6px] text-[#888]">{t}</div>)}
      </div>
      <div className="flex w-[38px] items-center justify-center border-r border-[#999] font-bold">Model</div>
      <div className="flex w-[45px] items-center justify-center border-r border-[#999] bg-[#d4d4d4]">3D Views</div>
      <div className="flex w-[72px] items-center justify-center border-r border-[#999] bg-[#d4d4d4] pr-[4px]">Motion Study 1</div>
    </div>
  );
}

function FilterBar() {
  const f = ["sDot", "sLine", "sFace", "sSurf", "sBody", "sAxis", "sPlane", "sPt", "sSk", "sSeg", "sMid", "sCm", "sDim", "sAng", "sSurfF", "sGtol", "sNote", "sDat", "sWeld", "sHatch", "sMag", "sScrew", "sPic", "cg", "sBlk", "sBlk2", "sGr", "sGr2", "sGr3"];
  const s1 = ["nDot", "nCen", "nLine", "nCirc", "nX", "nNear"];
  const s2 = ["nTan", "nPerp", "nPar", "nCor", "nCorD"];
  const s3 = ["nLen", "nGrid", "nAng"];
  return (
    <div className="flex h-[23px] shrink-0 items-center border-b border-[#cfcfcf] bg-[#f7f7f7] pt-px">
      <div className="ml-[3px] mr-[4px] h-[17px] border-l border-dotted border-[#888]" />
      <Cell w="w-[18px]"><Icon n="fun" c="size-[12px]" /></Cell>
      <Cell w="w-[18px]"><Icon n="fun3" c="size-[13px]" /></Cell>
      <Cell w="w-[18px]"><Icon n="funP" c="size-[13px]" /></Cell>
      <div className="ml-px flex h-[18px] w-[28px] border border-[#999]">
        <div className="flex w-[19px] items-center justify-center bg-[#b3b3b3]"><Icon n="cursor" c="size-[13px]" /></div>
        <Cell w="w-[7px]"><Caret /></Cell>
      </div>
      <Cell w="w-[18px]"><Icon n="curG" c="size-[13px]" /></Cell>
      <div className="ml-px mr-[4px] h-[14px] w-px bg-[#ccc]" />
      {f.map((n, i) => (
        <div key={n} className="flex w-[18px] shrink-0 items-center justify-center">
          <svg viewBox="0 0 18 18" className="h-[13.500px] w-[13.500px]">
            <g>{icons[n]}</g>
            <path d="M11 10h7l-2.500 3v5h-2v-5z" fill={i > 25 ? "#c32be0" : "#9156b4"} />
          </svg>
        </div>
      ))}
      <div className="ml-[2px] h-[20px] w-px bg-[#aaa]" />
      <div className="ml-[3px] mr-[6px] h-[17px] border-l border-dotted border-[#777]" />
      {s1.map((n) => <Cell key={n} w="w-[17.950px]"><Icon n={n} c="size-[13px]" /></Cell>)}
      <div className="ml-[2px] h-[14px] w-px bg-[#bbb]" />
      <div className="ml-[3px] flex">{s2.map((n) => <Cell key={n} w="w-[18px]"><Icon n={n} c="size-[12px]" /></Cell>)}</div>
      <div className="ml-[2px] h-[14px] w-px bg-[#999]" />
      <div className="ml-[3px] flex">{s3.map((n) => <Cell key={n} w="w-[18px]"><Icon n={n} c="size-[12px]" /></Cell>)}</div>
      <div className="ml-[5px] h-[20px] w-px bg-[#aaa]" />
    </div>
  );
}

function StatusBar() {
  return (
    <div className="flex h-[12px] shrink-0 items-center bg-[#f7f7f7] whitespace-nowrap">
      <span className="w-[1007px] tracking-[-0.300px]">SOLIDWORKS Premium 2024 SP1.0</span>
      <span className="w-[63px]">Under Defined</span>
      <span className="w-[139px]">Editing Assembly</span>
      <span className="w-[36px]">MMGS</span>
      <Caret up />
      <div className="ml-auto mr-[2px]"><Icon n="trafficSt" c="size-[11px]" /></div>
    </div>
  );
}

const disc = (fill, t, tf = "#fff") => (
  <svg viewBox="0 0 16 16" className="size-full">
    <circle cx="8" cy="8" r="8" fill={fill} />
    <text x="8" y="12.200" fontSize="12" fontWeight="700" textAnchor="middle" fill={tf}>{t}</text>
  </svg>
);
const yandex = (
  <svg viewBox="0 0 16 16" className="size-full">
    <circle cx="8" cy="8" r="8" fill="#fff" />
    <path d="M4 4l4 5v4.500" fill="none" stroke="#f03a3a" strokeWidth="2.300" />
    <path d="M12 4L8 9" stroke="#fb6b2d" strokeWidth="2.300" />
  </svg>
);
const cube = (
  <svg viewBox="0 0 16 16" className="size-full">
    <path d="M1 4l5-3 9 1v10l-5 3-9-2z" fill="#c3161c" />
    <path d="M1 4l9 1 5-3-9-1z" fill="#e7484a" />
    <path d="M3 7h2v3H3M7 7v3h2V7" stroke="#fff" fill="none" />
  </svg>
);
const trayPath = (d) => <svg viewBox="0 0 16 16" className="size-full"><path d={d} fill="none" stroke="#eee" strokeWidth="1.200" /></svg>;

function Taskbar() {
  const apps = [
    { w: "w-[36px]", bar: "bg-[#6cb0ea]", k: "explorer", el: <svg viewBox="0 0 16 16" className="size-full"><path d="M1 2h5l1.500 2H15v10H1z" fill="#f5bf3d" /><path d="M1 5h14v9H1z" fill="#fbd765" /><path d="M3 9h10v6h-3v-3H6v3H3z" fill="#3d8fd6" /></svg> },
    { w: "w-[32px]", k: "ya", el: disc("#f23c24", "Я") },
    { w: "w-[32px]", bg: "bg-[#ad6227]", bar: "bg-[#ff7a14]", k: "yb", el: yandex },
    { w: "w-[33px]", bar: "bg-[#6cb0ea]", k: "chrome", el: (
      <svg viewBox="0 0 16 16" className="size-full">
        <circle cx="8" cy="8" r="7.800" fill="#f6c52c" />
        <path d="M8 8L1.300 4A7.800 7.800 0 0 1 14.800 4.200H8z" fill="#df3b2f" />
        <path d="M8 8L1.300 4A7.800 7.800 0 0 0 7.500 15.800L11 9.500z" fill="#2f9e4d" />
        <circle cx="8" cy="8" r="3.800" fill="#fff" /><circle cx="8" cy="8" r="3" fill="#3f80ea" />
      </svg>) },
    { w: "w-[32px]", bg: "bg-[#5d6068]", bar: "bg-[#6cb0ea]", k: "sw", el: (
      <svg viewBox="0 0 16 16" className="size-full">
        <path d="M0 3l4-3h12v10l-3 3H0z" fill="#b5151b" /><path d="M0 3l4-3h12l-3 3z" fill="#e3453f" />
        <text x="1" y="9" fontSize="7.500" fontWeight="700" fill="#fff">SW</text>
        <path d="M2 10h14v6H2z" fill="#222" /><text x="2.200" y="15.300" fontSize="6" fontWeight="700" fill="#fff">2024</text>
      </svg>) },
    { w: "w-[33px]", bar: "bg-[#6cb0ea]", k: "word", el: <svg viewBox="0 0 16 16" className="size-full"><path d="M4 1h12v14H4z" fill="#2f7fd6" /><path d="M4 1h12v4H4z" fill="#4aa2ec" /><path d="M4 11h12v4H4z" fill="#1a4fa3" /><path d="M0 4h9v9H0z" fill="#1d57b5" /><text x="1" y="11" fontSize="7" fontWeight="700" fill="#fff">W</text></svg> },
    { w: "w-[33px]", bar: "bg-[#6cb0ea]", k: "tg", el: <svg viewBox="0 0 16 16" className="size-full"><circle cx="7.500" cy="7.500" r="7.500" fill="#2ea3dc" /><path d="M2.500 7.500L12 3.500l-1.500 8-3-2L6 11l-.5-3z" fill="#fff" /><rect x="6.500" y="9" width="9.500" height="7" rx="1.500" fill="#e8403c" /><text x="11.200" y="14.800" fontSize="6" textAnchor="middle" fill="#fff">34</text></svg> },
    { w: "w-[32px]", bar: "bg-[#6cb0ea]", k: "ps", el: disc("#cf4520", "P") },
  ];
  const tray = [
    disc("#c8432b", "P"), yandex,
    <svg viewBox="0 0 16 16" className="size-full"><path d="M1 4l5-3 7 1v9l-5 3-7-2z" fill="#d01f24" /><circle cx="11" cy="11" r="4.500" fill="#34a14a" /><path d="M9 11l2 2 3-4" stroke="#fff" fill="none" /></svg>,
    cube,
    <svg viewBox="0 0 16 16" className="size-full"><rect width="16" height="16" rx="2" fill="#f4f4f4" /><path d="M3 8a5 4 0 0 1 9-3" stroke="#e7553c" strokeWidth="2" fill="none" /><path d="M13 8a5 4 0 0 1-9 4M6 8.500h5" stroke="#3a88dc" strokeWidth="2" fill="none" /></svg>,
    <svg viewBox="0 0 16 16" className="size-full"><path d="M0 8l15-7-3 13-5-4z" fill="#f2f2f2" /><circle cx="4" cy="12.500" r="2.500" fill="#e13b2b" /></svg>,
    <svg viewBox="0 0 16 16" className="size-full"><circle cx="10" cy="6" r="4.500" fill="none" stroke="#f28a1e" strokeWidth="2.500" /><path d="M6.500 9.500L1 15" stroke="#f28a1e" strokeWidth="2.500" /></svg>,
    <svg viewBox="0 0 16 16" className="size-full"><path d="M1 1h14v14H1z" fill="#a9a9c4" stroke="#ddd" /><path d="M3 3h10v7H3z" fill="#8c8cb0" /></svg>,
    trayPath("M3 5h8v7c0 2-8 2-8 0zM11 7h3v4h-3M4 3c2-3 5-3 7 0M6 8v3"),
    trayPath("M8 1a7 7 0 1 0 .1 0M1 8h14M8 1c-5 4-5 10 0 14 5-4 5-10 0-14"),
    <svg viewBox="0 0 16 16" className="size-full"><path d="M3 6h13v7H4z" fill="#eee" /><path d="M0 4h5v4H0zM1 2v2M4 2v2" stroke="#eee" fill="#eee" /></svg>,
    trayPath("M1 6h2l4-3v10l-4-3H1zM9 6c1 1 1 3 0 4M11.500 4.500c2 2 2 5 0 7M14 3c2.500 3 2.500 7 0 10"),
  ];
  return (
    <footer className="flex h-[27px] shrink-0 border-t border-[#666] bg-[linear-gradient(90deg,#363a42_0px,#363a42_32px,#3a2628_262px,#372b2d_390px,#393c45_430px,#393d47_600px,#242e46_636px,#383d49_700px,#363c49_790px,#1c2b46_840px,#1a2340_1000px,#191f35_1280px)] text-white">
      <Cell w="w-[32px] pb-[2px]"><svg viewBox="0 0 12 12" className="size-[11px]"><path d="M0 1.700l5.500-.8v5H0zM6.200.8L12 0v5.900H6.200zM0 6.500h5.500v4.900L0 10.600zM6.200 6.500H12V12l-5.800-.8z" fill="#fff" /></svg></Cell>
      <div className="flex w-[230px] shrink-0 items-center bg-[#303132] pl-[8px] text-[10px] tracking-[-0.320px] text-[#dcdcdc]">
        <svg viewBox="0 0 12 12" className="size-[11px]"><circle cx="7.300" cy="4.700" r="3.900" fill="none" stroke="#ddd" /><path d="M4.500 7.500L.5 11.500" stroke="#ddd" /></svg>
        <span className="ml-[8px] w-[152px] pb-[2px] whitespace-nowrap">Type here to search</span>
        <svg viewBox="0 0 48 24" className="h-[24px] w-[48px]">
          <path d="M3.500 18C4-4 35-4 37 18" fill="none" stroke="#7a55cf" strokeWidth="1.600" />
          <path d="M5 18C6-1 33-1 35 18" fill="none" stroke="#e07a9c" strokeWidth="1.600" />
          <path d="M6.600 18C8 1.500 31 1.500 33.400 18" fill="none" stroke="#f2b35c" strokeWidth="1.400" />
          <path d="M8 18C9 4 30 4 32 18" fill="none" stroke="#86cf7c" strokeWidth="1.400" />
          <path d="M9.500 18C10.500 6 28.500 6 30.500 18" fill="none" stroke="#57b3ea" strokeWidth="1.600" />
          <path d="M2 21c6-5 9-3 13-8 3-3 5-2 8 1 5 4 13 3 22 6l1 2c-10 3-37 2-44-1z" fill="#c98f58" />
          <path d="M12 16c3-4 7-5 9-1l-5 3z" fill="#f0c794" /><path d="M0 20c10-3 14 1 24-1s16-1 23 2c-8 4-40 4-47-1z" fill="#e3b27c" />
          <path d="M39 20V2M35 9v4h4M43.500 6v6H39" stroke="#5ba548" strokeWidth="2.300" fill="none" strokeLinecap="round" />
        </svg>
      </div>
      <Cell w="w-[31px] pb-[2px]"><svg viewBox="0 0 14 14" className="size-[11px]"><path d="M1 0v3h7V0M1 5h7v4H1zM1 14v-3h7v3M11.500 0v14M10 5h4" fill="none" stroke="#eee" strokeWidth="1.300" /></svg></Cell>
      {apps.map((a) => (
        <div key={a.k} className={`flex shrink-0 flex-col items-center ${a.w} ${a.bg || ""}`}>
          <div className="mt-[4px] size-[16px]">{a.el}</div>
          {a.bar && <div className={`mt-auto h-[2px] ${a.bg ? "w-full" : "w-[27px]"} ${a.bar}`} />}
        </div>
      ))}
      <div className="ml-auto flex shrink-0 items-center pb-[2px]">
        {tray.map((t, i) => <Cell key={i} w="w-[16.050px]"><div className="size-[11px]">{t}</div></Cell>)}
        <Cell w="w-[21px]"><svg viewBox="0 0 20 12" className="h-[9px] w-[15px]"><path d="M1 1h18v10H1zM3 4h14M3 6.500h14M5 9h10" fill="none" stroke="#eee" strokeWidth="1.100" /></svg></Cell>
        <Cell w="w-[26px]"><span className="text-[9px]">ع</span></Cell>
        <div className="w-[41px] text-center leading-[12px] tracking-[-0.250px] whitespace-nowrap"><div>11:21 PM</div><div>6/10/2025</div></div>
        <Cell w="w-[31px]">
          <svg viewBox="0 0 16 16" className="size-[15px]"><path d="M1 1h12v9H7l-3 3v-3H1z" fill="#fff" /><path d="M3 4h8M3 7h8" stroke="#333" /><circle cx="11.500" cy="11.500" r="4.200" fill="#333a4c" stroke="#bbb" strokeWidth=".6" /><text x="11.500" y="14" fontSize="7" textAnchor="middle" fill="#fff">2</text></svg>
        </Cell>
        <div className="ml-[2px] h-[24px] w-px bg-[#4a5064]" />
        <div className="w-[2px]" />
      </div>
    </footer>
  );
}

export default function App() {
  return (
    <div className="flex h-[720px] w-[1280px] flex-col overflow-hidden bg-[#f7f7f7] font-['Noto_Sans','Open_Sans',sans-serif] text-[8px] tracking-[-0.220px] text-[#1c1c1c]">
      <TitleBar />
      <Ribbon />
      <main className="relative flex h-[570px] shrink-0 flex-col bg-[radial-gradient(ellipse_700px_345px_at_310px_0px,#ffffff_50%,#ffffffcc_68%,#ffffff00_100%),radial-gradient(ellipse_300px_230px_at_1290px_0px,#f1f1f2_0%,#f1f1f200_100%),radial-gradient(ellipse_400px_200px_at_1300px_570px,#f2f2f5_0%,#f2f2f500_100%),linear-gradient(180deg,#e2e6f0_0px,#dadeea_230px,#dfe3ed_305px,#eff1f6_345px,#ffffff_390px,#ffffff_520px,#f9f9fb_570px)]">
        <TabRow />
        <div className="flex h-[555px] shrink-0">
          <ToolStrip />
          <FeaturePanel />
          <div className="relative w-[1095px] shrink-0">
            <Model />
            <TaskPane />
            <div className="absolute top-[257px] -left-px flex h-[26px] w-[6px] items-center justify-center border border-l-0 border-[#999] bg-[#f7f7f7]"><div className="size-[4px] rounded-full border border-[#aaa]" /></div>
          </div>
        </div>
      </main>
      <SheetTabs />
      <FilterBar />
      <StatusBar />
      <Taskbar />
    </div>
  );
}
